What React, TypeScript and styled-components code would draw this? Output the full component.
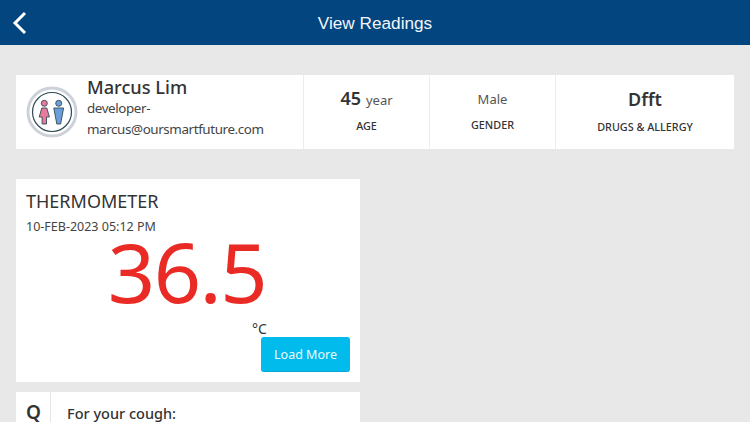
import React from 'react';
import styled, {createGlobalStyle} from 'styled-components';

const Global = createGlobalStyle`
  html, body {
    margin: 0;
    padding: 0;
    height: 422px;
    overflow: hidden;
    background: #e8e8e8;
    font-family: 'Noto Sans', 'Open Sans', sans-serif;
    color: #333;
  }
  * { box-sizing: border-box; }
`;

const Page = styled.div`
  width: 750px;
  height: 422px;
  overflow: hidden;
  display: flex;
  flex-direction: column;
`;

const Header = styled.header`
  height: 45px;
  flex-shrink: 0;
  background: #03457f;
  display: flex;
  align-items: center;
  justify-content: center;
  padding-top: 2px;
  position: relative;
`;

const BackIcon = styled.svg`
  position: absolute;
  left: 12px;
  top: 11px;
`;

const Title = styled.h1`
  margin: 0;
  font-family: 'Liberation Sans', sans-serif;
  font-weight: 400;
  font-size: 17.2px;
  color: #f2f6fa;
`;

const Content = styled.main`
  padding: 30px 16px 0;
  display: flex;
  flex-direction: column;
`;

const PatientCard = styled.section`
  height: 74px;
  background: #fff;
  display: grid;
  grid-template-columns: 287px 126px 126px 1fr;
`;

const Profile = styled.div`
  display: flex;
  align-items: center;
  gap: 9px;
  padding-left: 10px;
`;

const ProfileText = styled.div`
  display: flex;
  flex-direction: column;
  width: 190px;
  margin-bottom: 7px;
`;

const Name = styled.div`
  font-size: 18.2px;
  font-weight: 500;
  line-height: 21px;
  color: #333;
`;

const Email = styled.div`
  font-size: 13.4px;
  letter-spacing: -0.4px;
  line-height: 21px;
  color: #444;
`;

const Stat = styled.div<{$top: number; $labelGap: number}>`
  border-left: 1px solid #ececec;
  display: flex;
  flex-direction: column;
  align-items: center;
  padding-top: ${(p) => p.$top}px;
  gap: ${(p) => p.$labelGap}px;
`;

const StatValue = styled.div<{$strong?: boolean}>`
  font-size: ${(p) => (p.$strong ? 18 : 13)}px;
  font-weight: ${(p) => (p.$strong ? 600 : 400)};
  line-height: 24px;
  color: ${(p) => (p.$strong ? '#333' : '#555')};
`;

const Unit = styled.span`
  font-size: 13px;
  font-weight: 400;
  color: #555;
  margin-left: 5px;
`;

const StatLabel = styled.div`
  font-size: 10.8px;
  font-weight: 500;
  line-height: 14px;
  color: #333;
`;

const ReadingCard = styled.section`
  width: 344px;
  height: 203px;
  margin-top: 30px;
  background: #fff;
  padding: 0 10px;
  display: flex;
  flex-direction: column;
`;

const ReadingName = styled.div`
  font-size: 18px;
  line-height: 24px;
  margin-top: 10px;
  color: #333;
`;

const ReadingDate = styled.div`
  font-size: 12.5px;
  line-height: 18px;
  margin-top: 5px;
  color: #444;
`;

const ReadingValue = styled.div`
  font-size: 83px;
  line-height: 64px;
  text-align: center;
  color: #ea2a25;
  letter-spacing: -1.5px;
  margin-top: 3px;
  padding-right: 2px;
`;

const Celsius = styled.div`
  font-size: 14px;
  line-height: 16px;
  color: #333;
  margin-left: 226px;
  margin-top: 18px;
`;

const LoadMore = styled.button`
  align-self: flex-end;
  width: 89px;
  height: 35px;
  border: none;
  border-bottom: 1px solid #0aa6d6;
  border-radius: 3px;
  background: #00bbec;
  color: #eafaff;
  font-family: inherit;
  font-size: 12.5px;
  padding: 0;
`;

const QuestionCard = styled.section`
  width: 344px;
  height: 30px;
  margin-top: 10px;
  background: #fff;
  display: flex;
`;

const QLabel = styled.div`
  width: 35px;
  border-right: 1px solid #e4e4e4;
  font-size: 19px;
  font-weight: 600;
  line-height: 20px;
  padding: 10px 0 0 10px;
  color: #333;
`;

const QText = styled.div`
  font-size: 14.5px;
  font-weight: 500;
  line-height: 18px;
  padding: 12px 0 0 16px;
  color: #333;
`;

const AvatarIcon = styled.svg`
  flex-shrink: 0;
`;

const Avatar = () => (
  <AvatarIcon width="52" height="52" viewBox="0 0 52 52">
    <circle cx="26" cy="26" r="24" fill="#fff" stroke="#cdd1da" strokeWidth="3" />
    <circle cx="26" cy="26" r="19.5" fill="#fff" stroke="#2f4a55" strokeWidth="1.2" />
    <circle cx="18.3" cy="17.3" r="3" fill="#e87a9c" stroke="#2f4a55" strokeWidth="0.9" />
    <path
      d="M15.8 22h5l2.6 9h-2.9v7h-4.4v-7h-2.9z"
      fill="#e87a9c"
      stroke="#2f4a55"
      strokeWidth="0.9"
      strokeLinejoin="round"
    />
    <circle cx="32.7" cy="17.3" r="3" fill="#6b9fdc" stroke="#2f4a55" strokeWidth="0.9" />
    <path
      d="M27.8 22h9.8l-3 16h-3.8z"
      fill="#6b9fdc"
      stroke="#2f4a55"
      strokeWidth="0.9"
      strokeLinejoin="round"
    />
  </AvatarIcon>
);

export default function App() {
  return (
    <Page>
      <Global />
      <Header>
        <BackIcon width="16" height="24" viewBox="0 0 16 24">
          <path d="M13 2 3 12l10 10" fill="none" stroke="#fff" strokeWidth="3" />
        </BackIcon>
        <Title>View Readings</Title>
      </Header>
      <Content>
        <PatientCard>
          <Profile>
            <Avatar />
            <ProfileText>
              <Name>Marcus Lim</Name>
              <Email>developer-</Email>
              <Email>marcus@oursmartfuture.com</Email>
            </ProfileText>
          </Profile>
          <Stat $top={11} $labelGap={7}>
            <StatValue $strong>
              45<Unit>year</Unit>
            </StatValue>
            <StatLabel>AGE</StatLabel>
          </Stat>
          <Stat $top={12} $labelGap={7}>
            <StatValue>Male</StatValue>
            <StatLabel>GENDER</StatLabel>
          </Stat>
          <Stat $top={12} $labelGap={9}>
            <StatValue $strong>Dfft</StatValue>
            <StatLabel>DRUGS &amp; ALLERGY</StatLabel>
          </Stat>
        </PatientCard>
        <ReadingCard>
          <ReadingName>THERMOMETER</ReadingName>
          <ReadingDate>10-FEB-2023 05:12 PM</ReadingDate>
          <ReadingValue>36.5</ReadingValue>
          <Celsius>°C</Celsius>
          <LoadMore>Load More</LoadMore>
        </ReadingCard>
        <QuestionCard>
          <QLabel>Q</QLabel>
          <QText>For your cough:</QText>
        </QuestionCard>
      </Content>
    </Page>
  );
}
